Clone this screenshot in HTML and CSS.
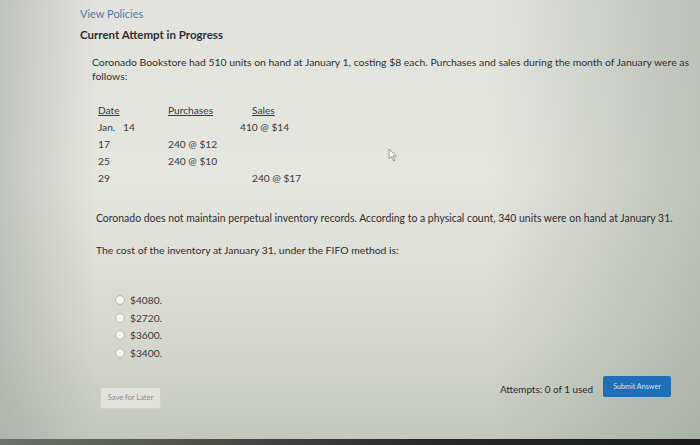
FILE: index.html
```html
<!DOCTYPE html>
<html>
<head>
<meta charset="utf-8">
<link rel="stylesheet" href="styles.css">
</head>
<body>
<div class="page">
  <a class="policies">View Policies</a>
  <h2 class="attempt">Current Attempt in Progress</h2>
  <p class="intro">Coronado Bookstore had 510 units on hand at January 1, costing $8 each. Purchases and sales during the month of January were as follows:</p>
  <div class="table">
    <div class="row head"><span class="c1"><u>Date</u></span><span class="c2"><u>Purchases</u></span><span class="c3"><u>Sales</u></span></div>
    <div class="row"><span class="c1">Jan.&nbsp;&nbsp; 14</span><span class="c2"></span><span class="c3 left">410 @ $14</span></div>
    <div class="row"><span class="c1">17</span><span class="c2">240 @ $12</span><span class="c3"></span></div>
    <div class="row"><span class="c1">25</span><span class="c2">240 @ $10</span><span class="c3"></span></div>
    <div class="row"><span class="c1">29</span><span class="c2"></span><span class="c3">240 @ $17</span></div>
  </div>
  <p class="note">Coronado does not maintain perpetual inventory records. According to a physical count, 340 units were on hand at January 31.</p>
  <p class="question">The cost of the inventory at January 31, under the FIFO method is:</p>
  <ul class="options">
    <li><span class="radio"></span>$4080.</li>
    <li><span class="radio"></span>$2720.</li>
    <li><span class="radio"></span>$3600.</li>
    <li><span class="radio"></span>$3400.</li>
  </ul>
  <div class="footer">
    <button class="save">Save for Later</button>
    <div class="submit-area">
      <span class="attempts">Attempts: 0 of 1 used</span>
      <button class="submit">Submit Answer</button>
    </div>
  </div>
</div>
<svg class="cursor" width="10" height="14" viewBox="0 0 10 14"><path d="M1 1 L1 11 L3.5 8.5 L5.5 13 L7 12.3 L5 8 L8.5 8 Z" fill="#f4f4ee" stroke="#8a8c86" stroke-width="0.8"/></svg>
<div class="bezel"></div>
</body>
</html>
```
FILE: styles.css
```css
html, body { margin: 0; padding: 0; }
body {
  width: 700px; height: 445px; overflow: hidden; position: relative;
  font-family: Lato, "Open Sans", sans-serif;
  color: #3a3a3a;
  background:
    linear-gradient(90deg, rgba(150,155,150,0.45) 0%, rgba(255,255,255,0) 14%, rgba(255,255,255,0) 70%, rgba(140,150,140,0.45) 100%),
    linear-gradient(180deg, #e2e2de 0%, #e6e6e0 40%, #d6d8d0 75%, #c2c6bc 100%);
}
.page { padding: 7px 0 0 80px; }
.policies { display: block; color: #5679a3; font-size: 11px; line-height: 14px; }
.attempt { margin: 7px 0 0; font-size: 11.5px; line-height: 14px; font-weight: 700; color: #2e2e2e; }
.intro { margin: 13px 0 0 12px; width: 605px; font-size: 10.4px; line-height: 14px; color: #2f2f2f; }
.table { margin: 18px 0 0 18px; font-size: 10.2px; color: #3a3a3a; }
.row { display: flex; height: 17px; align-items: center; }
.row.head { height: 17px; }
.c1 { width: 70px; }
.c2 { width: 72px; }
.c3 { width: 80px; padding-left: 12px; }
.c3.left { padding-left: 0; }
.note { margin: 25px 0 0 16px; font-size: 10.45px; line-height: 14px; color: #2f2f2f; }
.question { margin: 18px 0 0 16px; font-size: 10.4px; line-height: 14px; color: #2f2f2f; }
.options { list-style: none; margin: 34px 0 0 35px; padding: 0; font-size: 10.2px; color: #3a3a3a; }
.options li { display: flex; align-items: center; height: 17.7px; }
.radio { width: 8px; height: 8px; border: 1px solid #b8bab4; border-radius: 50%; background: #f2f2ee; margin-right: 5px; }
.footer { display: flex; justify-content: space-between; width: 591px; margin-top: 7px; align-items: flex-start; }
.save { margin: 18px 0 0 20px; width: 61px; height: 22px; background: rgba(240,240,236,0.6); border: 1px solid #cfd0cc; border-radius: 2px; font-family: Lato, sans-serif; font-size: 7.5px; color: #8b8c88; padding: 0; }
.submit-area { display: flex; align-items: center; gap: 10px; margin-top: 7px; }
.attempts { font-size: 9.9px; color: #2a2a2a; position: relative; top: 3px; }
.submit { width: 68px; height: 21px; background: #1f6fb8; color: #d6e4f2; border: none; border-radius: 2px; font-family: Lato, sans-serif; font-size: 7.2px; padding: 0; }
.cursor { position: absolute; left: 388px; top: 148px; }
.bezel { position: absolute; left: 0; right: 0; bottom: 0; height: 6px; background: linear-gradient(90deg, #6f726c, #2a2a28 60%, #1a1a1a); }
```
